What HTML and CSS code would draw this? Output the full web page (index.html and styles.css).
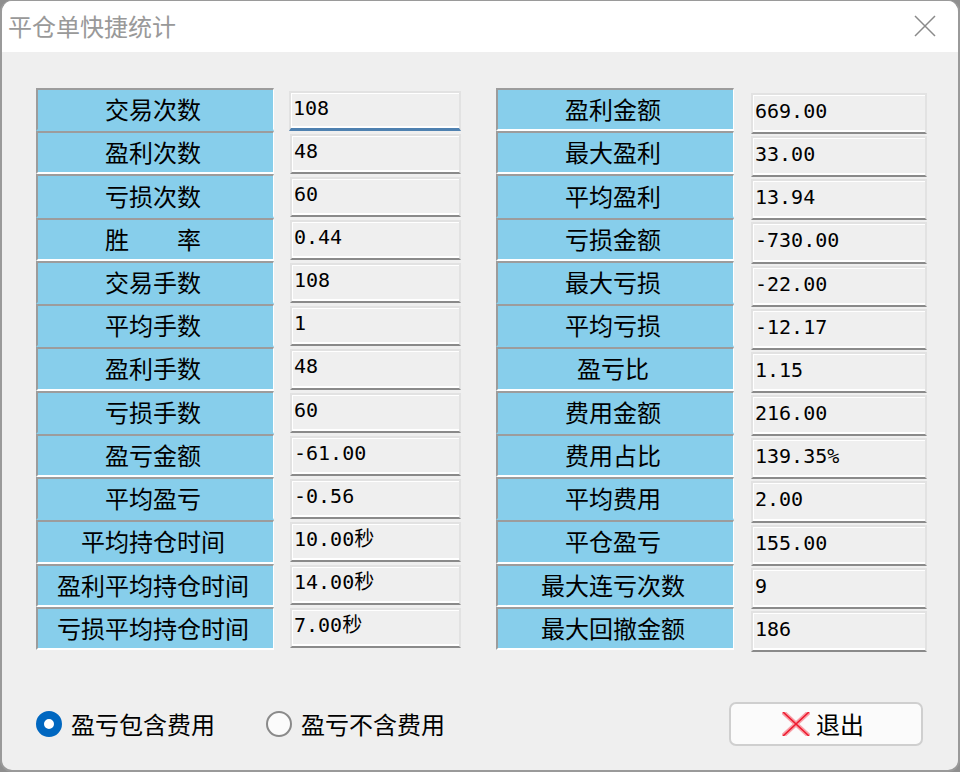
FILE: index.html
```html
<!DOCTYPE html>
<html lang="zh-CN">
<head>
<meta charset="utf-8">
<title>平仓单快捷统计</title>
<link rel="stylesheet" href="styles.css">
</head>
<body>
<div class="window">
  <header class="titlebar">
    <span class="title">平仓单快捷统计</span>
    <svg class="close" width="22" height="22" viewBox="0 0 22 22"><path d="M1 1L21 21M21 1L1 21" stroke="#8a8a8a" stroke-width="1.5" fill="none"/></svg>
  </header>
  <main class="content">
    <div class="tables">
      <section class="table table-left">
        <div class="labels">
          <div class="label flush">交易次数</div>
          <div class="label">盈利次数</div>
          <div class="label flush">亏损次数</div>
          <div class="label">胜　　率</div>
          <div class="label flush">交易手数</div>
          <div class="label flush">平均手数</div>
          <div class="label">盈利手数</div>
          <div class="label flush">亏损手数</div>
          <div class="label">盈亏金额</div>
          <div class="label flush">平均盈亏</div>
          <div class="label">平均持仓时间</div>
          <div class="label">盈利平均持仓时间</div>
          <div class="label">亏损平均持仓时间</div>
        </div>
        <div class="values">
          <div class="value focus">108</div>
          <div class="value">48</div>
          <div class="value">60</div>
          <div class="value">0.44</div>
          <div class="value">108</div>
          <div class="value">1</div>
          <div class="value">48</div>
          <div class="value">60</div>
          <div class="value">-61.00</div>
          <div class="value">-0.56</div>
          <div class="value">10.00秒</div>
          <div class="value">14.00秒</div>
          <div class="value">7.00秒</div>
        </div>
      </section>
      <section class="table table-right">
        <div class="labels">
          <div class="label">盈利金额</div>
          <div class="label">最大盈利</div>
          <div class="label flush">平均盈利</div>
          <div class="label">亏损金额</div>
          <div class="label flush">最大亏损</div>
          <div class="label flush">平均亏损</div>
          <div class="label">盈亏比</div>
          <div class="label flush">费用金额</div>
          <div class="label">费用占比</div>
          <div class="label flush">平均费用</div>
          <div class="label">平仓盈亏</div>
          <div class="label">最大连亏次数</div>
          <div class="label">最大回撤金额</div>
        </div>
        <div class="values">
          <div class="value">669.00</div>
          <div class="value">33.00</div>
          <div class="value">13.94</div>
          <div class="value">-730.00</div>
          <div class="value">-22.00</div>
          <div class="value">-12.17</div>
          <div class="value">1.15</div>
          <div class="value">216.00</div>
          <div class="value">139.35%</div>
          <div class="value">2.00</div>
          <div class="value">155.00</div>
          <div class="value">9</div>
          <div class="value">186</div>
        </div>
      </section>
    </div>
    <footer class="footer">
      <div class="radios">
        <label class="radio"><span class="dot on"></span>盈亏包含费用</label>
        <label class="radio"><span class="dot"></span>盈亏不含费用</label>
      </div>
      <button class="exit" type="button">
        <svg width="28" height="24" viewBox="0 0 28 24"><path d="M1 0L27 24M27 0L1 24" stroke="#f7a0a8" stroke-width="4.5" fill="none"/><path d="M1 0L27 24M27 0L1 24" stroke="#ee1c30" stroke-width="1.6" fill="none"/></svg>
        <span>退出</span>
      </button>
    </footer>
  </main>
</div>
</body>
</html>
```

FILE: styles.css
```css
* { box-sizing: border-box; }
html, body { margin: 0; height: 100%; background: #8f8f8f; }
body { font-family: "Noto Sans CJK SC", sans-serif; color: #000; }
.window {
  width: 960px; height: 772px; margin: 0;
  background: #efefef; border: solid #9a9a9a; border-width: 1px 2px 2px 2px;
  border-radius: 12px; overflow: hidden;
  display: flex; flex-direction: column;
}
.titlebar {
  height: 51px; flex: none; background: #fff;
  display: flex; align-items: center; justify-content: space-between;
  padding: 0 22px 2px 6px;
}
.title { font-size: 24px; color: #999; line-height: 1; }
.close { display: block; margin-top: 1px; }
.content { flex: 1; padding: 36px 0 0 34px; display: flex; flex-direction: column; }
.tables { display: flex; gap: 35px; }
.table { display: flex; align-items: flex-start; }
.table-left { gap: 16px; }
.table-right { gap: 17px; }
.labels { width: 238px; height: 562px; display: grid; grid-template-rows: repeat(13, 1fr); }
.label {
  background: #87ceeb; border-top: 2px solid #9c9c9c; border-left: 2px solid #9c9c9c;
  border-bottom: 2px solid #fff; border-right: 1px solid #fff;
  display: flex; align-items: center; justify-content: center;
  font-size: 24px; line-height: 1; padding: 0 5px 1px 0;
}
.label.flush { border-bottom-color: #87ceeb; }
.values { display: grid; grid-template-rows: repeat(13, 1fr); }
.table-left .values { width: 171px; height: 560px; margin-top: 3px; }
.table-right .values { width: 176px; height: 561px; margin-top: 5px; }
.value {
  margin-bottom: 3px; background: #efefef;
  border-top: 2px solid #e2e2e2; border-left: 2px solid #e2e2e2; border-right: 2px solid #e2e2e2;
  border-bottom: 2px solid #8a8a8a; box-shadow: inset 0 -2px 0 #fff, inset 1px 1px 0 #fff;
  font: 20px/1 "DejaVu Sans Mono", "Noto Sans CJK SC", monospace;
  padding: 6px 0 0 2px;
}
.table-left .value { padding-top: 5px; }
.table-right .value { margin-bottom: 2px; }
.value.focus { border-bottom: 3px solid #4f81b0; margin-left: -1px; }
.footer { display: flex; justify-content: space-between; align-items: center; margin-top: 48px; padding-right: 35px; }
.radios { display: flex; gap: 51px; }
.radio { display: flex; align-items: center; gap: 9px; font-size: 24px; line-height: 1; }
.dot { width: 26px; height: 26px; border-radius: 50%; border: 2px solid #8a8a8a; background: #fbfbfb; }
.dot.on { border: 8px solid #0067c0; background: #fff; }
.exit {
  width: 194px; height: 44px; padding: 0 6px 0 0; background: #fbfbfb;
  border: 2px solid #cfcfcf; border-radius: 7px;
  display: flex; align-items: center; justify-content: center; gap: 6px;
  font: 24px/1 "Noto Sans CJK SC", sans-serif; color: #000;
}
```
